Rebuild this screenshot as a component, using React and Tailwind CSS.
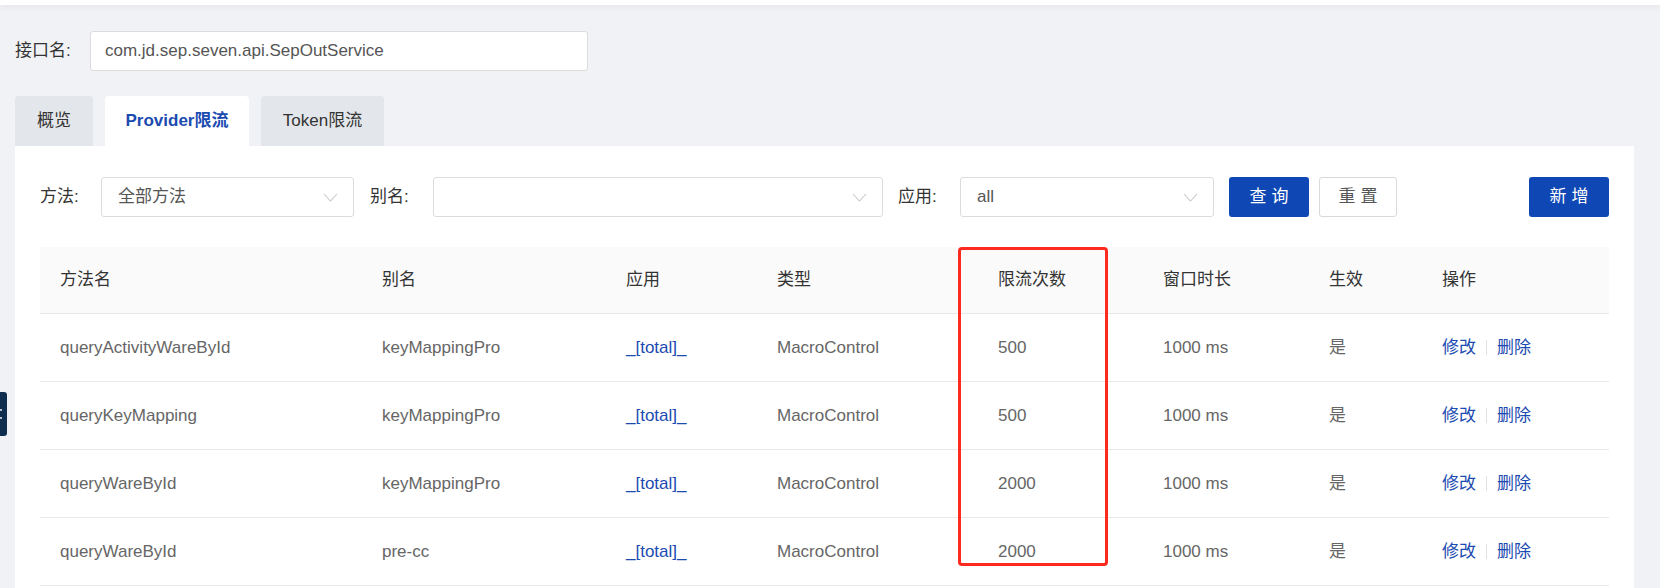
import React from 'react';

const rows = [
  { method: 'queryActivityWareById', alias: 'keyMappingPro', count: '500' },
  { method: 'queryKeyMapping', alias: 'keyMappingPro', count: '500' },
  { method: 'queryWareById', alias: 'keyMappingPro', count: '2000' },
  { method: 'queryWareById', alias: 'pre-cc', count: '2000' },
];

const cols = 'grid grid-cols-[322px_244px_151px_221px_165px_166px_113px_1fr] items-center';

const Chevron = () => (
  <svg width="15" height="9" viewBox="0 0 15 9" fill="none" className="shrink-0">
    <path d="M1 1l6.5 7L14 1" stroke="#c8c8c8" strokeWidth="1.1" />
  </svg>
);

const Select = ({ value, width }) => (
  <div className={`${width} h-[40px] flex items-center justify-between pl-[16px] pr-[15px] bg-white border border-[#dcdcdc] rounded-[3px]`}>
    <span className="text-[#555]">{value}</span>
    <Chevron />
  </div>
);

const App = () => {
  return (
    <div
      className="relative h-[588px] bg-[#f0f2f5] text-[17px] overflow-hidden"
      style={{ fontFamily: '"Liberation Sans", "Noto Sans CJK SC", sans-serif' }}
    >
      <div className="h-[5px] bg-white shadow-[0_2px_6px_rgba(0,0,0,0.06)]" />

      <div className="pl-[15px] pr-[26px]">
        <div className="flex items-center mt-[26px]">
          <span className="w-[75px] text-[#333]">接口名:</span>
          <div className="w-[498px] h-[40px] flex items-center pl-[14px] bg-white border border-[#dcdcdc] rounded-[3px] text-[#555]">
            com.jd.sep.seven.api.SepOutService
          </div>
        </div>

        <div className="flex items-end mt-[25px] gap-[12px]">
          <div className="w-[78px] h-[50px] flex items-center justify-center bg-[#e3e6ea] rounded-t-[4px] text-[#333]">概览</div>
          <div className="w-[144px] h-[50px] flex items-center justify-center bg-white rounded-t-[4px] text-[#1b4bb1] font-bold">Provider限流</div>
          <div className="w-[123px] h-[50px] flex items-center justify-center bg-[#e3e6ea] rounded-t-[4px] text-[#333]">Token限流</div>
        </div>

        <div className="bg-white px-[25px] pt-[31px] pb-[40px]">
          <div className="flex items-center">
            <span className="w-[61px] text-[#333]">方法:</span>
            <Select value="全部方法" width="w-[253px]" />
            <span className="ml-[16px] w-[63px] text-[#333]">别名:</span>
            <Select value="" width="w-[450px]" />
            <span className="ml-[15px] w-[62px] text-[#333]">应用:</span>
            <Select value="all" width="w-[254px]" />
            <button className="ml-[15px] w-[80px] h-[40px] bg-[#0f47b4] text-white rounded-[3px] tracking-[5px] pl-[5px]">查询</button>
            <button className="ml-[10px] w-[78px] h-[40px] bg-white border border-[#d9d9d9] text-[#555] rounded-[3px] tracking-[5px] pl-[5px]">重置</button>
            <button className="ml-auto w-[80px] h-[40px] bg-[#0f47b4] text-white rounded-[3px] tracking-[5px] pl-[5px]">新增</button>
          </div>

          <div className="relative mt-[30px]">
            <div className={`${cols} h-[67px] bg-[#fafafa] border-b border-[#e8e8e8] text-[#333]`}>
              {['方法名', '别名', '应用', '类型', '限流次数', '窗口时长', '生效', '操作'].map((h) => (
                <div key={h} className="pl-[20px]">{h}</div>
              ))}
            </div>
            {rows.map((r, i) => (
              <div key={i} className={`${cols} h-[68px] border-b border-[#e8e8e8] text-[#666]`}>
                <div className="pl-[20px]">{r.method}</div>
                <div className="pl-[20px]">{r.alias}</div>
                <div className="pl-[20px] text-[#1b4bb1]">_[total]_</div>
                <div className="pl-[20px]">MacroControl</div>
                <div className="pl-[20px]">{r.count}</div>
                <div className="pl-[20px]">1000 ms</div>
                <div className="pl-[20px]">是</div>
                <div className="pl-[20px] flex items-center text-[#1b4bb1]">
                  <span>修改</span>
                  <span className="mx-[10px] w-px h-[15px] bg-[#e0e0e0]" />
                  <span>删除</span>
                </div>
              </div>
            ))}
            <div className="absolute left-[918px] top-0 w-[150px] h-[319px] border-[3px] border-[#ff2a1f] rounded-[4px] pointer-events-none" />
          </div>
        </div>
      </div>

      <div className="absolute left-0 top-[392px] w-[7px] h-[44px] bg-[#0e2d4f] rounded-r-[3px] flex flex-col items-start justify-center gap-[6px]">
        <span className="w-[2px] h-[2px] bg-white/70" />
        <span className="w-[2px] h-[2px] bg-white/70" />
      </div>
    </div>
  );
};

export default App;
